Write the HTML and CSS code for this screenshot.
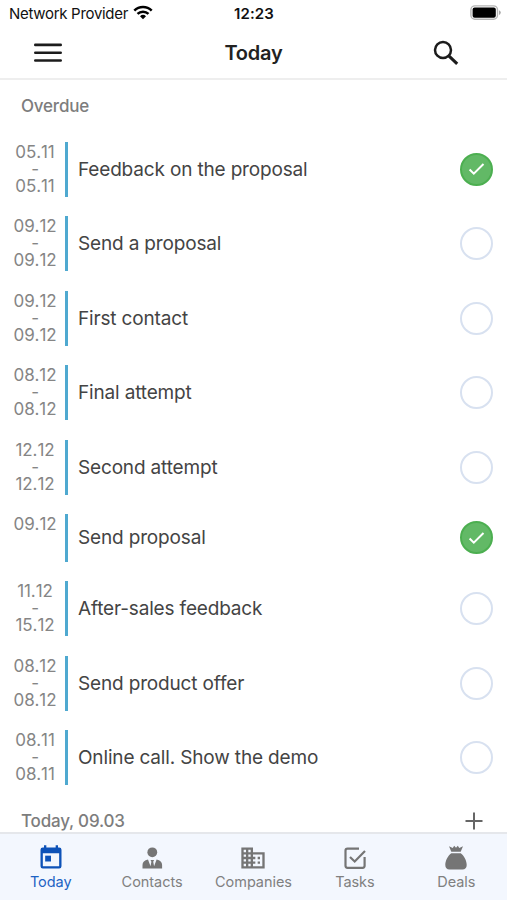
FILE: index.html
```html
<!DOCTYPE html>
<html lang="en">
<head>
<meta charset="utf-8">
<title>Today</title>
<link rel="stylesheet" href="styles.css">
</head>
<body>
<div class="app">
  <div class="status">
    <div class="carrier"><span>Network Provider</span>
      <svg width="20" height="15" viewBox="0 0 20 15"><g fill="none" stroke="#000" stroke-width="2.5"><path d="M1.3 5.6a12.3 12.3 0 0 1 17.4 0"/><path d="M4.5 8.9a7.8 7.8 0 0 1 11 0"/></g><path d="M10 14.2 7 11.2a4.3 4.3 0 0 1 6 0z"/></svg>
    </div>
    <span class="clock">12:23</span>
    <svg class="battery" width="32" height="16" viewBox="0 0 32 16"><rect x=".9" y=".9" width="26.6" height="13.4" rx="4" fill="#fff" stroke="#b5b5b5" stroke-width="1.4"/><rect x="2.600" y="2.500" width="23.200" height="10.200" rx="2" /><path d="M29 5.2q1.8.8 1.8 2.4T29 10z" fill="#aaa"/></svg>
  </div>
  <header class="header">
    <svg class="menu" width="28" height="20" viewBox="0 0 28 20"><path d="M1.3 1.9h25.4M1.3 9.7h25.4M1.3 17.5h25.4" stroke="#1c1c1c" stroke-width="2.6" stroke-linecap="round"/></svg>
    <h1>Today</h1>
    <svg class="search" width="26" height="26" viewBox="0 0 26 26" fill="none" stroke="#1c1c1c"><circle cx="10" cy="10" r="8" stroke-width="2.5"/><path d="m15.8 15.8 8.4 8" stroke-width="3.1"/></svg>
  </header>
  <main class="content">
    <h2 class="section">Overdue</h2>
    <ul class="tasks">
      <li><div class="date">05.11<br>-<br>05.11</div><span class="name">Feedback on the proposal</span><span class="check done"><svg width="18" height="14" viewBox="0 0 18 14"><path d="m1.6 7.5 4.2 4.2L15.5 2"/></svg></span></li>
      <li><div class="date">09.12<br>-<br>09.12</div><span class="name">Send a proposal</span><span class="check"></span></li>
      <li><div class="date">09.12<br>-<br>09.12</div><span class="name">First contact</span><span class="check"></span></li>
      <li><div class="date">08.12<br>-<br>08.12</div><span class="name">Final attempt</span><span class="check"></span></li>
      <li><div class="date">12.12<br>-<br>12.12</div><span class="name">Second attempt</span><span class="check"></span></li>
      <li class="single"><div class="date">09.12</div><span class="name">Send proposal</span><span class="check done"><svg width="18" height="14" viewBox="0 0 18 14"><path d="m1.6 7.5 4.2 4.2L15.5 2"/></svg></span></li>
      <li><div class="date">11.12<br>-<br>15.12</div><span class="name">After-sales feedback</span><span class="check"></span></li>
      <li><div class="date">08.12<br>-<br>08.12</div><span class="name">Send product offer</span><span class="check"></span></li>
      <li><div class="date">08.11<br>-<br>08.11</div><span class="name">Online call. Show the demo</span><span class="check"></span></li>
    </ul>
    <div class="next">
      <h2>Today, 09.03</h2>
      <svg width="18" height="18" viewBox="0 0 18 18"><path d="M9 .5v17M.5 9h17" stroke="#666" stroke-width="2"/></svg>
    </div>
  </main>
  <nav class="tabs">
    <a class="tab active"><svg width="28" height="28" viewBox="0 0 24 24"><path fill-rule="evenodd" d="M5 3h1V1h2v2h8V1h2v2h1a2 2 0 0 1 2 2v14a2 2 0 0 1-2 2H5a2 2 0 0 1-2-2V5a2 2 0 0 1 2-2zM5 8v11h14V8z"/><path d="M7 10h5v5H7z"/></svg><span>Today</span></a>
    <a class="tab"><svg width="28" height="28" viewBox="0 0 28 28"><circle cx="14.300" cy="8.300" r="4.900"/><path d="M4.500 24.500v-3.500c0-3 1.900-4.600 5.500-5.500l2.500 6.800.9-4.500-.9-1.800h3.600l-.9 1.800.9 4.500 2.500-6.800c3.600.9 5.500 2.500 5.500 5.500v3.500z"/></svg><span>Contacts</span></a>
    <a class="tab"><svg width="28" height="28" viewBox="0 0 24 24"><path d="M12 7V3H2v18h20V7H12zM6 19H4v-2h2v2zm0-4H4v-2h2v2zm0-4H4V9h2v2zm0-4H4V5h2v2zm4 12H8v-2h2v2zm0-4H8v-2h2v2zm0-4H8V9h2v2zm0-4H8V5h2v2zm10 12h-8v-2h2v-2h-2v-2h2v-2h-2V9h8v10zm-2-8h-2v2h2v-2zm0 4h-2v2h2v-2z"/></svg><span>Companies</span></a>
    <a class="tab"><svg width="28" height="28" viewBox="0 0 28 28"><path d="M18 4.700H6.500a2 2 0 0 0-2 2v15.100a2 2 0 0 0 2 2h15.100a2 2 0 0 0 2-2V13M9 13l4.700 4.500L24 7" fill="none" stroke="#757575" stroke-width="2.200"/></svg><span>Tasks</span></a>
    <a class="tab"><svg width="28" height="28" viewBox="0 0 28 28"><path d="M7 2.200 10.700 4 12.200 1.800l1.800 2 1.800-2L17.300 4 21 2.200 18.700 7.800H9.300zM9.300 9.200h9.400c3.500 2.700 6 7.300 6 11.800 0 2.900-1.600 4.500-4.200 4.500h-13c-2.600 0-4.200-1.600-4.200-4.500 0-4.500 2.500-9.100 6-11.800z"/></svg><span>Deals</span></a>
  </nav>
</div>
</body>
</html>
```
FILE: styles.css
```css
* { box-sizing: border-box; }
body { margin: 0; background: #fff; font-family: Inter, "Liberation Sans", sans-serif; }
h1, h2, ul { margin: 0; padding: 0; }
svg { display: block; flex: none; }
.app { width: 507px; height: 900px; display: flex; flex-direction: column; overflow: hidden; }
.status { height: 28px; flex: none; display: grid; grid-template-columns: 1fr auto 1fr; align-items: center; padding: 0 5px 1px 9px; color: #111; }
.carrier { display: flex; align-items: center; gap: 5px; font-size: 15px; letter-spacing: -.3px; white-space: nowrap; }
.carrier svg { margin-top: -2px; }
.clock { font-size: 15px; font-weight: 600; letter-spacing: .1px; margin-left: -3px; }
.battery { justify-self: end; margin-top: -1px; }
.header { height: 52px; flex: none; display: grid; grid-template-columns: 1fr auto 1fr; align-items: center; padding: 0 48px 1px; border-bottom: 2px solid #eee; }
.header h1 { font-size: 20px; font-weight: 600; color: #222; letter-spacing: -.2px; }
.menu { margin-left: -14px; }
.search { justify-self: end; }
.content { flex: 1; min-height: 0; overflow: hidden; }
.section { height: 61.500px; padding: 15.500px 0 0 21px; }
h2 { font-size: 17px; line-height: 21px; font-weight: 500; color: #7d7d7d; letter-spacing: -.2px; }
.tasks { list-style: none; display: flex; flex-direction: column; gap: 19.500px; }
.tasks li { height: 55px; display: flex; align-items: center; padding-right: 14px; }
.tasks .single { height: 47.500px; }
.date { width: 68px; align-self: stretch; padding: 2px 0 0 5px; border-right: 3px solid #4fa9d0; font-size: 17px; line-height: 17.200px; font-kerning: none; letter-spacing: -.1px; text-align: center; color: #858585; }
.name { flex: 1; margin-left: 10px; font-size: 19px; color: #444; letter-spacing: -.16px; }
.check { width: 33px; height: 33px; border-radius: 50%; border: 2px solid #d8e1f0; display: grid; place-items: center; }
.done { background: #62b966; border-color: #4caf50; }
.done path { fill: none; stroke: #fff; stroke-width: 2; }
.next { display: flex; justify-content: space-between; align-items: center; padding: 26px 24px 0 21px; }
.next svg { margin-top: -1px; }
.tabs { height: 68px; flex: none; border-top: 2px solid #e5e7eb; background: #f3f7fe; display: grid; grid-template-columns: repeat(5, 1fr); }
.tab { display: flex; flex-direction: column; align-items: center; padding-top: 10px; font-size: 14.500px; line-height: 20px; letter-spacing: -.05px; color: #808080; fill: #757575; }
.active { color: #1d63c4; fill: #0d52b8; }
```
